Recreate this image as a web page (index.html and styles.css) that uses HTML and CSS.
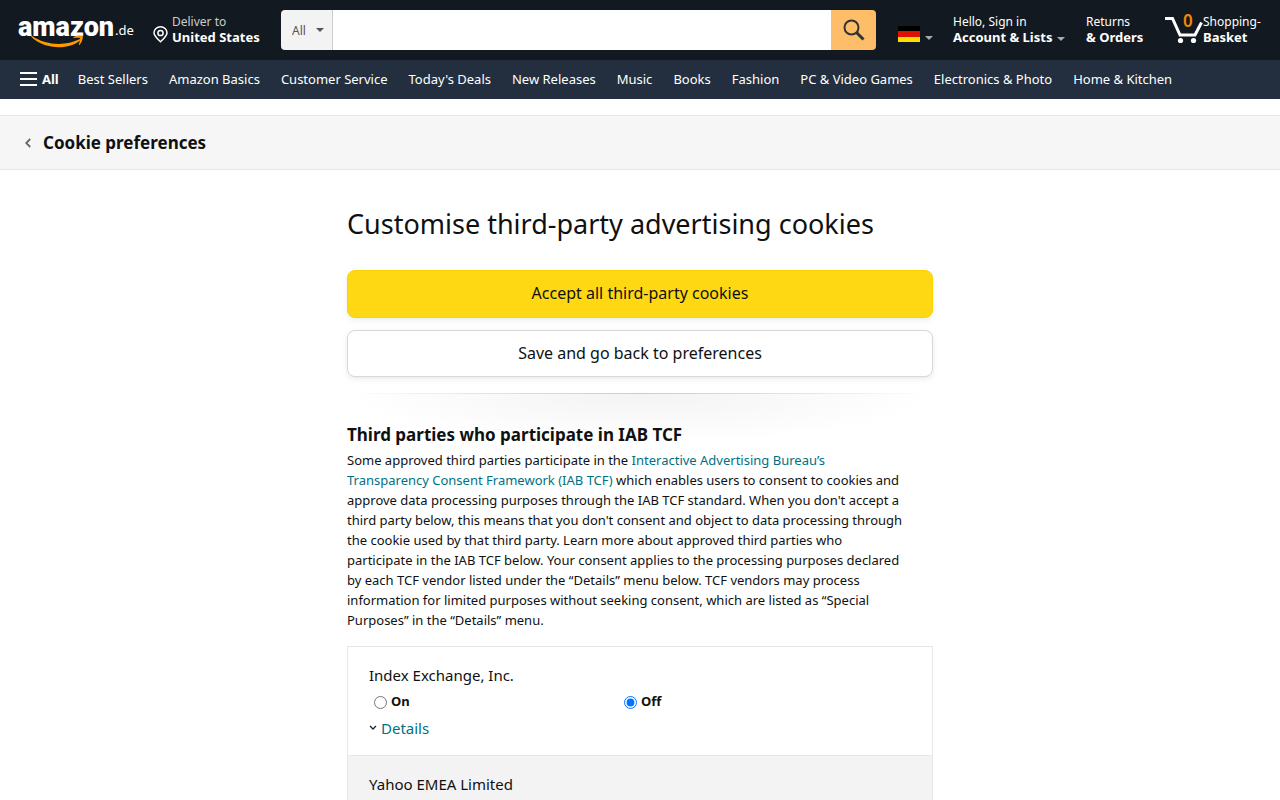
FILE: index.html
```html
<!DOCTYPE html>
<html lang="en">
<head>
<meta charset="utf-8">
<meta name="viewport" content="width=device-width, initial-scale=1">
<title>Cookie preferences</title>
<link rel="stylesheet" href="styles.css">
</head>
<body>
<header class="topbar">
  <a class="logo" href="#">
    <span class="logo-word">amazon</span>
    <span class="logo-tld">.de</span>
    <svg class="logo-smile" viewBox="0 0 54 14" aria-hidden="true"><path d="M1 2C16 12 35 12 49 5c1-.5 1.500.4.6 1.200C38 16 14 16 .4 3 0 2.300.4 1.600 1 2Z" fill="#f90"/><path d="M42.500 3.200C45 1.200 50 .6 51.500 1.800c1 1.200-.3 6.500-3 9-.5.4-1 .1-.7-.4.7-1.800 1.900-5.200 1.300-6.100-.7-.9-4.300-.5-6.100-.2-.6 0-.9-.5-.5-.9Z" fill="#f90"/></svg>
  </a>
  <a class="deliver" href="#">
    <svg class="pin" viewBox="0 0 15 17" aria-hidden="true"><path d="M7.500 15.800C4.500 12.900 1 10 1 6.800a6.500 6 0 0 1 13 0c0 3.200-3.500 6.100-6.500 9Z" fill="none" stroke="#fff" stroke-width="1.500"/><circle cx="7.500" cy="7" r="2.600" fill="none" stroke="#fff" stroke-width="1.500"/></svg>
    <span class="two-line"><span class="small muted">Deliver to</span><b>United States</b></span>
  </a>
  <form class="search">
    <div class="scope">
      <select aria-label="Search in"><option>All</option></select>
      <i class="caret caret-dark"></i>
    </div>
    <input class="query" type="text" aria-label="Search Amazon">
    <button class="go" type="button" aria-label="Go"><svg viewBox="0 0 22 22" aria-hidden="true"><circle cx="8.500" cy="8.500" r="7" fill="none" stroke="#333" stroke-width="2"/><path d="M13.500 13.500 20.500 20.500" stroke="#333" stroke-width="3"/></svg></button>
  </form>
  <a class="flag-link" href="#" aria-label="Choose a language">
    <svg class="flag" viewBox="0 0 22 16" aria-hidden="true"><path fill="#000" d="M0 0h22v5H0z"/><path fill="#d10" d="M0 5h22v6H0z"/><path fill="#fd0" d="M0 11h22v5H0z"/></svg>
    <i class="caret"></i>
  </a>
  <a class="account" href="#">
    <span class="two-line"><span class="small">Hello, Sign in</span><b>Account &amp; Lists</b></span>
    <i class="caret"></i>
  </a>
  <a class="orders" href="#"><span class="two-line"><span class="small">Returns</span><b>&amp; Orders</b></span></a>
  <a class="basket" href="#">
    <span class="cart">
      <svg viewBox="0 0 38 28" aria-hidden="true"><path d="M0 2.500H7.500L15 19H30L36.500 6.500" fill="none" stroke="#fff" stroke-width="3"/><circle cx="15.500" cy="24.500" r="2.600" fill="#fff"/><circle cx="28.500" cy="24.500" r="2.600" fill="#fff"/></svg>
      <span class="count">0</span>
    </span>
    <span class="two-line"><span class="small">Shopping-</span><b>Basket</b></span>
  </a>
</header>
<nav class="mainnav">
  <a class="all" href="#"><svg viewBox="0 0 17 14" aria-hidden="true"><path d="M0 1h17M0 7h17M0 13h17" stroke="#fff" stroke-width="2"/></svg>All</a>
  <a href="#">Best Sellers</a>
  <a href="#">Amazon Basics</a>
  <a href="#">Customer Service</a>
  <a href="#">Today's Deals</a>
  <a href="#">New Releases</a>
  <a href="#">Music</a>
  <a href="#">Books</a>
  <a href="#">Fashion</a>
  <a href="#">PC &amp; Video Games</a>
  <a href="#">Electronics &amp; Photo</a>
  <a href="#">Home &amp; Kitchen</a>
</nav>
<div class="crumb">
  <a href="#"><svg viewBox="0 0 6 10" aria-hidden="true"><path d="M5.200 1 1.200 5l4 4" fill="none" stroke="#666" stroke-width="1.800"/></svg><h2>Cookie preferences</h2></a>
</div>
<main class="content">
  <h1>Customise third-party advertising cookies</h1>
  <button class="btn primary" type="button">Accept all third-party cookies</button>
  <button class="btn" type="button">Save and go back to preferences</button>
  <section class="iab">
    <h2>Third parties who participate in IAB TCF</h2>
    <p>Some approved third parties participate in the <a href="#">Interactive Advertising Bureau’s<br>Transparency Consent Framework (IAB TCF)</a> which enables users to consent to cookies and<br>approve data processing purposes through the IAB TCF standard. When you don't accept a<br>third party below, this means that you don't consent and object to data processing through<br>the cookie used by that third party. Learn more about approved third parties who<br>participate in the IAB TCF below. Your consent applies to the processing purposes declared<br>by each TCF vendor listed under the “Details” menu below. TCF vendors may process<br>information for limited purposes without seeking consent, which are listed as “Special<br>Purposes” in the “Details” menu.</p>
  </section>
  <div class="vendors">
    <section class="vendor">
      <h3>Index Exchange, Inc.</h3>
      <div class="choices">
        <label><input type="radio" name="index"> On</label>
        <label><input type="radio" name="index" checked> Off</label>
      </div>
      <a class="details" href="#"><svg viewBox="0 0 8 6" aria-hidden="true"><path d="M1 1l3 3 3-3" fill="none" stroke="#222" stroke-width="1.300"/></svg>Details</a>
    </section>
    <section class="vendor">
      <h3>Yahoo EMEA Limited</h3>
    </section>
  </div>
</main>
</body>
</html>
```
FILE: styles.css
```css
* { box-sizing: border-box; }
html { scrollbar-width: none; }
body {
  margin: 0;
  background: #fff;
  color: #0f1111;
  font: 13px/20px "Noto Sans", "Open Sans", sans-serif;
}
a { color: #007185; text-decoration: none; }
h1, h2, h3, p { margin: 0; }
svg { display: block; flex: none; }

.topbar {
  display: flex;
  align-items: center;
  height: 60px;
  padding: 0 20px 0 18px;
  background: #131921;
}
.topbar a { color: #fff; white-space: nowrap; }
.logo { position: relative; display: flex; align-items: center; gap: 1px; width: 117px; height: 60px; flex: none; }
.logo-word { font: 900 27px/36px Roboto, sans-serif; padding-bottom: 6px; }
.logo-tld { font-size: 13px; }
.logo-smile { position: absolute; left: 13px; top: 34px; width: 54px; height: 14px; }
.two-line { display: flex; flex-direction: column; padding-bottom: 1px; line-height: 15px; }
.two-line b { font-size: 13px; }
.two-line .small { font-size: 12px; line-height: 16px; }
.two-line .muted { color: #ccc; }
.deliver { display: flex; align-items: center; gap: 4px; width: 127px; padding-left: 18px; flex: none; }
.pin { width: 15px; height: 17px; margin-top: 8px; }
.caret { flex: none; border: 4px solid transparent; border-top-color: #a7acb2; border-bottom: 0; }
.caret-dark { border-top-color: #555; }

.search { display: flex; flex: 1; height: 40px; margin-left: 19px; border-radius: 4px; overflow: hidden; }
.scope { position: relative; width: 52px; background: #f3f3f3; border-right: 1px solid #cdcdcd; }
.scope select { appearance: none; width: 100%; height: 40px; padding: 0 0 0 11px; border: 0; background: none; color: #555; font: 12px "Noto Sans", sans-serif; }
.scope .caret { position: absolute; right: 8px; top: 18px; pointer-events: none; }
.query { flex: 1; min-width: 0; border: 0; padding: 0 8px; background: #fff; font: 15px "Noto Sans", sans-serif; }
.go { display: flex; align-items: center; justify-content: center; width: 45px; padding: 0; border: 0; background: #febd69; }
.go svg { width: 22px; height: 22px; }

.flag-link { display: flex; align-items: center; gap: 5px; margin-left: 22px; padding-top: 8px; }
.flag { width: 22px; height: 16px; }
.flag-link .caret { margin-top: 8px; }
.account { display: flex; align-items: flex-end; gap: 5px; width: 113px; margin-left: 20px; }
.account .caret { margin-bottom: 5px; }
.orders { width: 60px; margin-left: 20px; }
.basket { display: flex; align-items: center; margin-left: 19px; width: 95px; }
.cart { position: relative; width: 38px; }
.cart svg { width: 38px; height: 28px; }
.count { position: absolute; left: 18px; top: -5px; color: #f08804; font: 600 17px/20px "Noto Sans", sans-serif; }

.mainnav { display: flex; align-items: center; gap: 21px; height: 39px; padding: 0 20px 1px; background: #232f3e; }
.mainnav a { color: #fff; white-space: nowrap; }
.mainnav .all { display: flex; align-items: center; gap: 5px; margin-right: -2px; font-weight: bold; }
.all svg { width: 17px; height: 14px; }

.crumb { margin-top: 16px; padding: 15px 25px 14px; background: #f6f6f6; border-top: 1px solid #e7e7e7; border-bottom: 1px solid #e7e7e7; }
.crumb a { display: flex; align-items: center; gap: 12px; color: #0f1111; }
.crumb svg { width: 6px; height: 10px; }
h2 { font-size: 17px; line-height: 24px; }

.content { max-width: 586px; margin: 0 auto; padding-top: 36px; }
h1 { font-size: 27px; line-height: 36px; font-weight: normal; margin-bottom: 28px; white-space: nowrap; }
.btn {
  display: block;
  width: 100%;
  height: 47px;
  margin-bottom: 16px;
  padding: 0 8px 2px;
  border: 1px solid #d5d9d9;
  border-radius: 8px;
  background: #fff;
  box-shadow: 0 2px 5px rgba(213, 217, 217, .5);
  color: #0f1111;
  font: 16px/20px "Noto Sans", sans-serif;
}
.primary { height: 48px; margin-bottom: 12px; border-color: #fcd200; background: #ffd814; }
.iab {
  padding: 30px 0 16px;
  background:
    linear-gradient(to right, transparent, #ccc 50%, transparent) top / 100% 1px no-repeat,
    radial-gradient(ellipse 50% 50px at 50% 0, #f3f3f3, #fff) top / 100% 50px no-repeat;
}
.iab p { white-space: nowrap; padding-top: 3px; }

.vendors { border: 1px solid #e7e7e7; }
.vendor { padding: 17px 21px 16px; }
.vendor + .vendor { border-top: 1px solid #e7e7e7; background: #f3f3f3; }
h3 { font-size: 15px; line-height: 22px; font-weight: normal; }
.choices { display: grid; grid-template-columns: 250px 1fr; padding: 5px 0 6px; font-weight: bold; }
.choices label { display: flex; align-items: center; gap: 4px; }
.choices input { width: 13px; height: 13px; margin: 2px 0 0 5px; }
.details { display: flex; align-items: center; gap: 4px; font-size: 15px; line-height: 22px; }
.details svg { width: 8px; height: 6px; }
```
